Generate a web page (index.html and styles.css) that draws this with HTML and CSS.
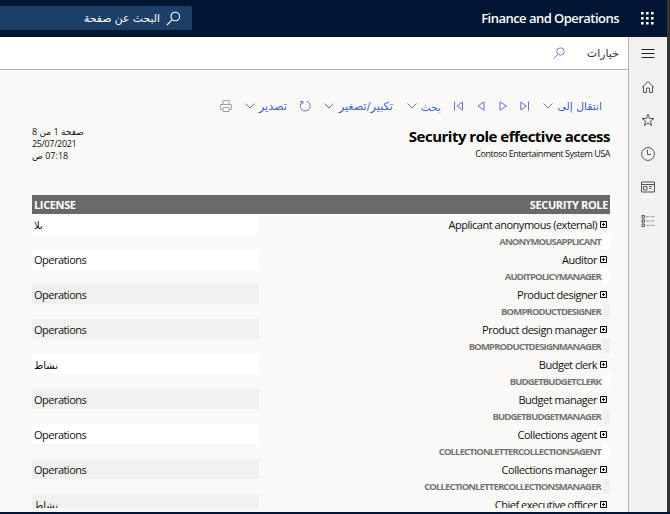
FILE: index.html
```html
<!DOCTYPE html>
<html lang="ar">
<head>
<meta charset="utf-8">
<title>Finance and Operations</title>
<link rel="stylesheet" href="styles.css">
</head>
<body>
<div class="window">
  <header class="topbar">
    <div class="search">
      <span class="search-text" dir="rtl">البحث عن صفحة</span>
      <svg class="search-icon" width="15" height="15" viewBox="0 0 15 15"><circle cx="9.3" cy="5.5" r="4.3"/><path d="M6.2 8.7 1 14"/></svg>
    </div>
    <div class="brand">Finance and Operations</div>
    <svg class="waffle" width="14" height="14" viewBox="0 0 14 14"><path d="M1 1h2.600v2.600H1zM6 1h2.600v2.600H6zM11 1h2.600v2.600h-2.600zM1 6h2.600v2.600H1zM6 6h2.600v2.600H6zM11 6h2.600v2.600h-2.600zM1 11h2.600v2.600H1zM6 11h2.600v2.600H6zM11 11h2.600v2.600h-2.600z"/></svg>
  </header>
  <div class="body">
    <main class="main">
      <div class="options">
        <svg class="find" width="12" height="12" viewBox="0 0 12 12"><circle cx="7.5" cy="4.5" r="3.7"/><path d="M4.9 7.2.6 11.5"/></svg>
        <span class="options-text" dir="rtl">خيارات</span>
      </div>
      <div class="report">
        <div class="toolbar">
          <svg class="print" width="12" height="12" viewBox="0 0 12 12"><path d="M3 4.5v-4h6v4M3 9.5H.6v-5h10.8v5H9M3 7.5h6v4H3z"/></svg>
          <svg class="chev c1" width="10" height="6" viewBox="0 0 10 6"><path d="m.5.5 4.5 4.5L9.500.5"/></svg>
          <span class="tool t1" dir="rtl">تصدير</span>
          <svg class="refresh" width="12" height="12" viewBox="0 0 12 12"><path d="M8 1.3A5 5 0 1 1 3.300 1.900M1 1.500h2.800v2.800"/></svg>
          <svg class="chev c2" width="10" height="6" viewBox="0 0 10 6"><path d="m.5.5 4.5 4.5L9.500.5"/></svg>
          <span class="tool t2" dir="rtl">تكبير/تصغير</span>
          <svg class="chev c3" width="10" height="6" viewBox="0 0 10 6"><path d="m.5.5 4.5 4.5L9.500.5"/></svg>
          <span class="tool t3" dir="rtl">بحث</span>
          <svg class="nav n1" width="10" height="10" viewBox="0 0 10 10"><path d="M.5.5v9M8.500 1v8L3 5z"/></svg>
          <svg class="nav n2" width="8" height="10" viewBox="0 0 8 10"><path d="M7 .8v8.400L1 5z"/></svg>
          <svg class="nav n3" width="8" height="10" viewBox="0 0 8 10"><path d="M1 .8v8.400L7.300 5z"/></svg>
          <svg class="nav n4" width="10" height="10" viewBox="0 0 10 10"><path d="M8.500.5v9M.8 1v8L6.300 5z"/></svg>
          <svg class="chev c4" width="10" height="6" viewBox="0 0 10 6"><path d="m.5.5 4.5 4.5L9.500.5"/></svg>
          <span class="tool t4" dir="rtl">انتقال إلى</span>
        </div>
        <div class="heading">
          <div class="meta">
            <div dir="rtl">صفحة 1 من 8</div>
            <div>25/07/2021</div>
            <div dir="rtl">07:18 ص</div>
          </div>
          <div class="titles">
            <h1>Security role effective access</h1>
            <p>Contoso Entertainment System USA</p>
          </div>
        </div>
        <div class="thead"><span>LICENSE</span><span class="th-role">SECURITY ROLE</span></div>
        <div class="rows" id="rows"></div>
      </div>
    </main>
    <nav class="rail">
      <svg width="14" height="14" viewBox="0 0 14 14" class="menu"><path d="M.5 3.500h13M.5 7.500h13M.5 11.500h13"/></svg>
      <svg width="14" height="14" viewBox="0 0 14 14"><path d="M1.300 7 7 1.600 12.700 7M2.500 6v6.500h3V8h3v4.500h3V6"/></svg>
      <svg width="14" height="14" viewBox="0 0 14 14"><path d="m7 1.300 1.500 4.200h4.400L9.400 8.100l1.300 4.400L7 9.900l-3.700 2.600 1.300-4.400L1.100 5.500h4.400z"/></svg>
      <svg width="14" height="14" viewBox="0 0 14 14"><circle cx="7" cy="7" r="6.400"/><path d="M6.500 3v4.500H10"/></svg>
      <svg width="14" height="14" viewBox="0 0 14 14"><path d="M.5 2h13v10H.5zM.5 4.500h13M2.500 6.500h3.500v3.500H2.500zM8 6.500h3M8 8.500h2"/></svg>
      <svg width="14" height="14" viewBox="0 0 14 14"><path d="M1 1.500h2.500V4H1zM1 5.750h2.500v2.500H1zM1 10h2.500v2.500H1z"/><path class="faint" d="M5 2.700h3.500M9.500 2.700h4M5 7h3.500M9.500 7h4M5 11.300h3.500M9.500 11.300h4"/></svg>
    </nav>
    <div class="edge"></div>
  </div>
  <footer class="bottom"></footer>
</div>
<script src="rows.js"></script>
</body>
</html>
```
FILE: styles.css
```css
* { box-sizing: border-box; }
body { margin: 0; font-family: "Open Sans", "DejaVu Sans", sans-serif; background: #faf9f8; color: #111; }
svg { display: block; fill: none; stroke: #555; stroke-width: 1; flex: none; }
.window { width: 670px; height: 514px; display: flex; flex-direction: column; overflow: hidden; }
.topbar { height: 37px; flex: none; background: #001433; display: flex; align-items: center; border-right: 3px solid #333; }
.search { width: 192px; height: 24px; margin-top: -1px; background: #1b3f66; border-radius: 0 2px 2px 0; display: flex; align-items: center; justify-content: flex-end; padding-right: 11px; color: #fff; }
.search-text { font: 10.8px/24px "DejaVu Sans", sans-serif; margin: 2px 6px 0 0; white-space: nowrap; }
.search-icon { stroke: #fff; stroke-width: 1.1; }
.brand { margin: -1px 0 0 auto; font-size: 13px; font-weight: 600; color: #fff; letter-spacing: -.53px; white-space: nowrap; }
.waffle { margin: -1px 13px 0 21px; fill: #fff; stroke: none; }
.body { height: 475px; flex: none; display: flex; }
.main { width: 628px; display: flex; flex-direction: column; }
.options { height: 33px; flex: none; background: #fff; border-bottom: 1px solid #b4b3b2; display: flex; align-items: center; justify-content: flex-end; padding-right: 9px; }
.find { stroke: #7a83cf; margin-right: 22px; }
.options-text { font: 11px/20px "DejaVu Sans", sans-serif; color: #333; white-space: nowrap; margin-top: 2px; }
.report { height: 438px; overflow: hidden; padding: 26px 18px 0 32px; display: flex; flex-direction: column; }
.toolbar { height: 20px; flex: none; display: flex; align-items: center; margin-left: 188px; }
.tool { font: 11.3px/20px "DejaVu Sans", sans-serif; color: #3d63c4; white-space: nowrap; display: flex; flex: none; margin-top: 1px; }
.chev { stroke: #777; }
.print { stroke: #a3a3a3; }
.refresh, .nav { stroke: #6670c8; }
.c1 { margin-left: 13px; }
.t1 { width: 28px; margin-left: 4px; }
.refresh { margin-left: 12px; }
.c2 { margin-left: 13px; }
.t2 { width: 56px; margin-left: 3px; }
.c3 { margin-left: 14px; }
.t3 { width: 20px; margin-left: 4px; font-size: 10.6px; }
.n1 { margin-left: 13px; }
.n2 { margin-left: 13px; }
.n3 { margin-left: 14px; }
.n4 { margin-left: 13px; }
.c4 { margin-left: 13px; }
.t4 { width: 45px; margin-left: 4px; font-size: 10.8px; }
.heading { height: 79px; flex: none; display: flex; justify-content: space-between; }
.meta { padding-top: 10px; font: 9px/12px "Open Sans", "DejaVu Sans", sans-serif; display: flex; flex-direction: column; align-items: flex-start; letter-spacing: -.35px; }
.titles { text-align: right; padding-top: 10px; white-space: nowrap; }
h1 { margin: 0; font-size: 15px; line-height: 20px; font-weight: 700; color: #000; letter-spacing: -.5px; }
p { margin: 2px 0 0; font-size: 9px; line-height: 12px; letter-spacing: -.48px; }
.thead { height: 19px; flex: none; background: #696969; color: #fff; display: flex; justify-content: space-between; padding: 0 2px; font-size: 11px; line-height: 20px; font-weight: 700; letter-spacing: -.36px; }
.row { height: 35px; display: flex; justify-content: space-between; }
.license { width: 227px; height: 20px; background: #f1f0ef; padding-left: 2px; font-size: 11px; line-height: 22px; letter-spacing: -.52px; }
.license.light { background: #fff; }
.license[lang="ar"] { letter-spacing: 0; font-size: 10px; }
.role { white-space: nowrap; }
.name { display: flex; justify-content: flex-end; align-items: center; height: 21px; margin-bottom: -1px; padding-right: 3px; font-size: 11px; letter-spacing: -.48px; }
.plus { stroke: #000; margin-left: 3px; }
.code { display: flex; justify-content: flex-end; height: 15px; line-height: 16px; font-size: 9.5px; font-weight: 700; color: #757575; letter-spacing: -.86px; }
.code i { width: 7px; margin-left: 2px; background: #f1f0ef; }
.code i.light { background: #fff; }
.rail { width: 39px; background: #f3f2f1; border-left: 1px solid #b4b3b2; display: flex; flex-direction: column; align-items: center; gap: 19.5px; padding-top: 9px; }
.menu { stroke: #222; }
.faint { stroke: #999; }
.edge { width: 3px; background: #333; }
.bottom { height: 2px; background: #001433; }
```
FILE: rows.js
```js
const data = [
  ["بلا", "Applicant anonymous (external)", "ANONYMOUSAPPLICANT", true],
  ["Operations", "Auditor", "AUDITPOLICYMANAGER", true],
  ["Operations", "Product designer", "BOMPRODUCTDESIGNER", false],
  ["Operations", "Product design manager", "BOMPRODUCTDESIGNMANAGER", false],
  ["نشاط", "Budget clerk", "BUDGETBUDGETCLERK", true],
  ["Operations", "Budget manager", "BUDGETBUDGETMANAGER", false],
  ["Operations", "Collections agent", "COLLECTIONLETTERCOLLECTIONSAGENT", true],
  ["Operations", "Collections manager", "COLLECTIONLETTERCOLLECTIONSMANAGER", false],
  ["نشاط", "Chief executive officer", "", false]
];
document.getElementById("rows").innerHTML = data.map(([license, name, code, light]) => `
<div class="row">
  <div class="license ${light ? "light" : ""}" lang="${license === "Operations" ? "en" : "ar"}">${license}</div>
  <div class="role">
    <div class="name">${name}<svg class="plus" width="7" height="7" viewBox="0 0 7 7"><path d="M.5.5h6v6h-6zM2 3.500h3M3.500 2v3"/></svg></div>
    <div class="code">${code}<i class="${light ? "light" : ""}"></i></div>
  </div>
</div>`).join("");
```
